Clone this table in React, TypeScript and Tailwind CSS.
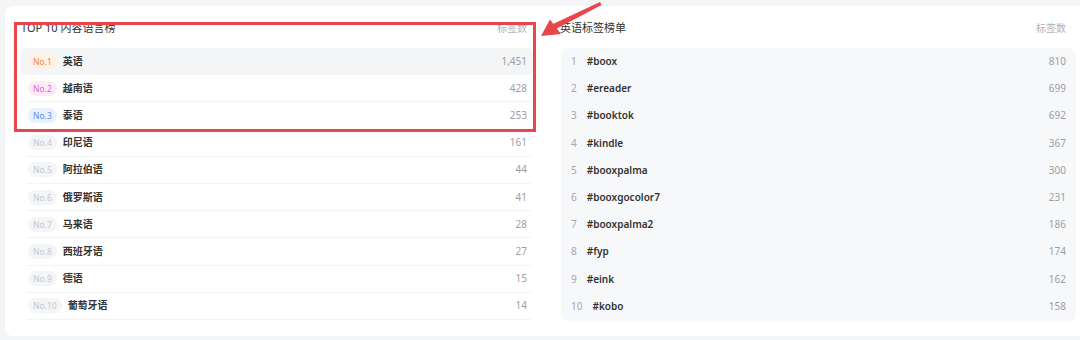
import React from "react";

const langs = [
  { name: "英语", count: "1,451" },
  { name: "越南语", count: "428" },
  { name: "泰语", count: "253" },
  { name: "印尼语", count: "161" },
  { name: "阿拉伯语", count: "44" },
  { name: "俄罗斯语", count: "41" },
  { name: "马来语", count: "28" },
  { name: "西班牙语", count: "27" },
  { name: "德语", count: "15" },
  { name: "葡萄牙语", count: "14" },
];

const tags = [
  { tag: "#boox", count: "810" },
  { tag: "#ereader", count: "699" },
  { tag: "#booktok", count: "692" },
  { tag: "#kindle", count: "367" },
  { tag: "#booxpalma", count: "300" },
  { tag: "#booxgocolor7", count: "231" },
  { tag: "#booxpalma2", count: "186" },
  { tag: "#fyp", count: "174" },
  { tag: "#eink", count: "162" },
  { tag: "#kobo", count: "158" },
];

const badgeStyles = [
  "bg-[#fff2e5] text-[#f7852e]",
  "bg-[#fdebf8] text-[#e163c9]",
  "bg-[#e9f0ff] text-[#5d8ef0]",
];

function Badge({ rank }: { rank: number }) {
  const style = badgeStyles[rank - 1] ?? "bg-[#f4f5f7] text-[#c4c7cd]";
  return (
    <span
      className={`${style} h-[15px] px-[5px] rounded-full text-[8.5px] leading-[15px] flex items-center`}
    >
      No.{rank}
    </span>
  );
}

export default function App() {
  return (
    <div
      className="relative h-[340px] w-[1080px] overflow-hidden bg-[#f4f5f7] pt-[6px] pl-[5px]"
      style={{ fontFamily: '"Noto Sans", "Noto Sans CJK SC", sans-serif' }}
    >
      <div className="h-[330px] rounded-l-lg bg-white pl-[16px] pr-[4px] pt-[14px] flex gap-[27px]">
        {/* left panel */}
        <div className="w-[512px]">
          <div className="flex items-center justify-between h-[16px] mb-[12px]">
            <p className="text-[11px] text-[#333]">TOP 10 内容语言榜</p>
            <p className="text-[10px] text-[#b0b3b8] mr-[6px]">标签数</p>
          </div>
          <ul>
            {langs.map((l, i) => (
              <li
                key={l.name}
                className={`${
                  i === 0 ? "bg-[#f4f5f7] rounded-[5px] pl-[7px] pr-[6px]" : "border-b border-[#f2f3f5] ml-[6px] mr-[2px] pl-[1px] pr-[4px]"
                } h-[27.2px] flex items-center justify-between`}
              >
                <div className="flex items-center gap-[6px]">
                  <Badge rank={i + 1} />
                  <span className="text-[10px] font-semibold text-[#333]">{l.name}</span>
                </div>
                <span className="text-[10px] text-[#9b9ea4]">{l.count}</span>
              </li>
            ))}
          </ul>
        </div>

        {/* right panel */}
        <div className="w-[516px]">
          <div className="flex items-center justify-between h-[16px] mb-[12px]">
            <p className="text-[11px] text-[#333]">英语标签榜单</p>
            <p className="text-[10px] text-[#b0b3b8] mr-[10px]">标签数</p>
          </div>
          <ul className="bg-[#f7f8fa] rounded-[7px] ml-[1px] pb-[1px]">
            {tags.map((t, i) => (
              <li key={t.tag} className="h-[27.2px] flex items-center justify-between pl-[10px] pr-[10px]">
                <div className="flex items-center gap-[10px]">
                  <span className="text-[10px] text-[#a3a6ab]">{i + 1}</span>
                  <span className="text-[10px] font-semibold text-[#333]">{t.tag}</span>
                </div>
                <span className="text-[10px] text-[#9b9ea4]">{t.count}</span>
              </li>
            ))}
          </ul>
        </div>
      </div>

      {/* annotation */}
      <div className="absolute left-[14px] top-[22px] w-[522px] h-[110px] border-[3px] border-[#e8464c]" />
      <svg className="absolute left-0 top-0" width="1080" height="340" viewBox="0 0 1080 340">
        <polygon points="600,2 601.5,5 556,29 553,24" fill="#e8464c" />
        <polygon points="541,36 550,19.5 561,34" fill="#e8464c" />
      </svg>
    </div>
  );
}
